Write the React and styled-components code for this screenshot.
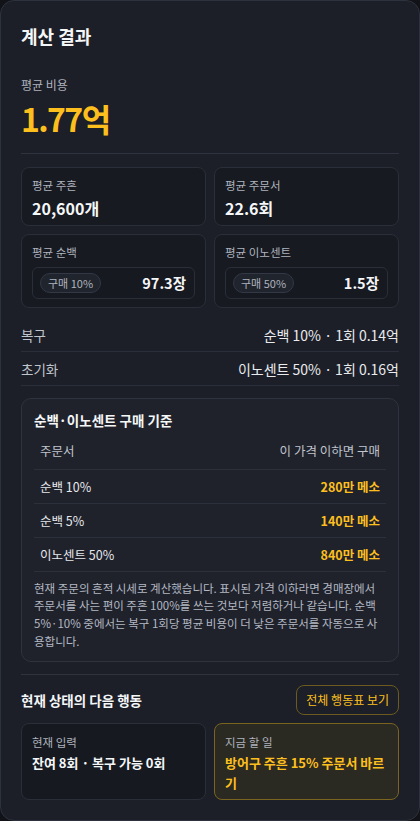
import React from "react";
import styled, { createGlobalStyle } from "styled-components";

const GlobalStyle = createGlobalStyle`
	* { box-sizing: border-box; }
	body {
		margin: 0;
		background: #111318;
		font-family: "Noto Sans CJK KR", "Noto Sans", sans-serif;
		color: #f1f3f7;
	}
`;

const Card = styled.section`
	background: #1c1f27;
	border: 1px solid #2e323d;
	border-radius: 14px;
	padding: 21px 20px 20px;
`;

const Title = styled.h2`
	margin: 0;
	font-size: 18px;
	line-height: 28px;
	font-weight: 700;
	color: #f5f6f8;
`;

const Label = styled.div`
	font-size: ${(p) => p.$size || 11.5}px;
	line-height: ${(p) => p.$lh || 17}px;
	color: #aeb3be;
`;

const CostBlock = styled.div`
	margin-top: 26px;
	padding-bottom: 15px;
	border-bottom: 1px solid #2f333e;
`;

const BigValue = styled.div`
	font-size: 32px;
	line-height: 40px;
	font-weight: 700;
	letter-spacing: -0.05em;
	color: #fcbf1e;
	margin-top: 4px;
`;

const StatGrid = styled.div`
	display: grid;
	grid-template-columns: 1fr 1fr;
	gap: 8px;
	margin-top: 13px;
`;

const StatCard = styled.div`
	background: #171a21;
	border: 1px solid #2a2e39;
	border-radius: 8px;
	padding: 9px 10px ${(p) => (p.$boxed ? 8 : 6)}px;
`;

const StatValue = styled.div`
	font-size: ${(p) => p.$size || 16}px;
	line-height: ${(p) => p.$lh || 22}px;
	font-weight: 700;
	color: #f5f6f8;
	margin-top: ${(p) => p.$mt || 0}px;
`;

const BuyBox = styled.div`
	display: flex;
	align-items: center;
	justify-content: space-between;
	margin-top: 6px;
	background: #161920;
	border: 1px solid #2a2e39;
	border-radius: 6px;
	padding: 5px 8px 5px 7px;
`;

const Pill = styled.span`
	font-size: 11px;
	line-height: 18px;
	color: #aeb3be;
	background: #20242d;
	border: 1px solid #333846;
	border-radius: 999px;
	padding: 0 7px;
`;

const InfoRows = styled.div`
	margin-top: 10px;
`;

const InfoRow = styled.div`
	display: flex;
	justify-content: space-between;
	align-items: center;
	height: 34px;
	border-bottom: 1px solid #2a2e38;
	font-size: 14px;
	color: #e9ebef;
	span:first-child { color: #c0c4cd; font-size: 13.5px; }
`;

const Criteria = styled.div`
	margin-top: 12px;
	background: #1f222b;
	border: 1px solid #2f333e;
	border-radius: 10px;
	padding: 10px 12px 10px;
`;

const SubTitle = styled.h3`
	margin: 0;
	font-size: 13.5px;
	line-height: 22px;
	font-weight: 700;
	color: #f5f6f8;
`;

const Table = styled.table`
	width: 100%;
	border-collapse: collapse;
	margin-top: 2px;
	font-size: 12.5px;
	th, td {
		height: 34px;
		padding: 0 6px;
		border-bottom: 1px solid #2c303a;
		text-align: left;
		font-weight: 400;
	}
	th { color: #c0c4cd; height: 36px; }
	td { color: #e6e8ec; }
	th:last-child, td:last-child { text-align: right; }
`;

const Price = styled.td`
	&& { color: #fcbf1e; font-weight: 700; }
`;

const Note = styled.p`
	margin: 8px 0 0;
	font-size: 11.5px;
	line-height: 17.8px;
	color: #b3b8c3;
`;

const NextSection = styled.div`
	margin-top: 12px;
	border-top: 1px solid #2f333e;
	padding-top: 10px;
`;

const NextHeader = styled.div`
	display: flex;
	justify-content: space-between;
	align-items: center;
`;

const OutlineButton = styled.button`
	font-family: "Noto Sans CJK KR", "Noto Sans", sans-serif;
	font-size: 12px;
	line-height: 18px;
	color: #fcbf1e;
	background: transparent;
	border: 1px solid #6d5a1f;
	border-radius: 8px;
	padding: 5px 9px;
	cursor: pointer;
`;

const ActionGrid = styled.div`
	display: grid;
	grid-template-columns: 1fr 1fr;
	gap: 8px;
	margin-top: 8px;
`;

const ActionCard = styled.div`
	background: ${(p) => (p.$highlight ? "#2b2a22" : "#161920")};
	border: 1px solid ${(p) => (p.$highlight ? "#7a6420" : "#2a2e39")};
	border-radius: 8px;
	padding: 10px 8px 6px 10px;
`;

const ActionValue = styled.div`
	margin-top: 2px;
	font-size: 13px;
	line-height: 20px;
	font-weight: 700;
	color: ${(p) => (p.$highlight ? "#fcbf1e" : "#f5f6f8")};
`;

const stats = [
	{ label: "평균 주흔", value: "20,600개" },
	{ label: "평균 주문서", value: "22.6회" },
];

const buys = [
	{ label: "평균 순백", pill: "구매 10%", value: "97.3장" },
	{ label: "평균 이노센트", pill: "구매 50%", value: "1.5장" },
];

const prices = [
	{ name: "순백 10%", price: "280만 메소" },
	{ name: "순백 5%", price: "140만 메소" },
	{ name: "이노센트 50%", price: "840만 메소" },
];

export default function App() {
	return (
		<>
			<GlobalStyle />
			<Card>
				<Title>계산 결과</Title>
				<CostBlock>
					<Label $size={12} $lh={18}>평균 비용</Label>
					<BigValue>1.77억</BigValue>
				</CostBlock>

				<StatGrid>
					{stats.map((s) => (
						<StatCard key={s.label}>
							<Label>{s.label}</Label>
							<StatValue $mt={3}>{s.value}</StatValue>
						</StatCard>
					))}
					{buys.map((b) => (
						<StatCard key={b.label} $boxed>
							<Label>{b.label}</Label>
							<BuyBox>
								<Pill>{b.pill}</Pill>
								<StatValue $size={14.5} $lh={20}>{b.value}</StatValue>
							</BuyBox>
						</StatCard>
					))}
				</StatGrid>

				<InfoRows>
					<InfoRow>
						<span>복구</span>
						<span>순백 10% · 1회 0.14억</span>
					</InfoRow>
					<InfoRow>
						<span>초기화</span>
						<span>이노센트 50% · 1회 0.16억</span>
					</InfoRow>
				</InfoRows>

				<Criteria>
					<SubTitle>순백·이노센트 구매 기준</SubTitle>
					<Table>
						<thead>
							<tr>
								<th>주문서</th>
								<th>이 가격 이하면 구매</th>
							</tr>
						</thead>
						<tbody>
							{prices.map((p) => (
								<tr key={p.name}>
									<td>{p.name}</td>
									<Price>{p.price}</Price>
								</tr>
							))}
						</tbody>
					</Table>
					<Note>
						현재 주문의 흔적 시세로 계산했습니다. 표시된 가격 이하라면 경매장에서
						주문서를 사는 편이 주흔 100%를 쓰는 것보다 저렴하거나 같습니다. 순백
						5%·10% 중에서는 복구 1회당 평균 비용이 더 낮은 주문서를 자동으로 사용합니다.
					</Note>
				</Criteria>

				<NextSection>
					<NextHeader>
						<SubTitle>현재 상태의 다음 행동</SubTitle>
						<OutlineButton>전체 행동표 보기</OutlineButton>
					</NextHeader>
					<ActionGrid>
						<ActionCard>
							<Label>현재 입력</Label>
							<ActionValue>잔여 8회 · 복구 가능 0회</ActionValue>
						</ActionCard>
						<ActionCard $highlight>
							<Label>지금 할 일</Label>
							<ActionValue $highlight>방어구 주흔 15% 주문서 바르기</ActionValue>
						</ActionCard>
					</ActionGrid>
				</NextSection>
			</Card>
		</>
	);
}
